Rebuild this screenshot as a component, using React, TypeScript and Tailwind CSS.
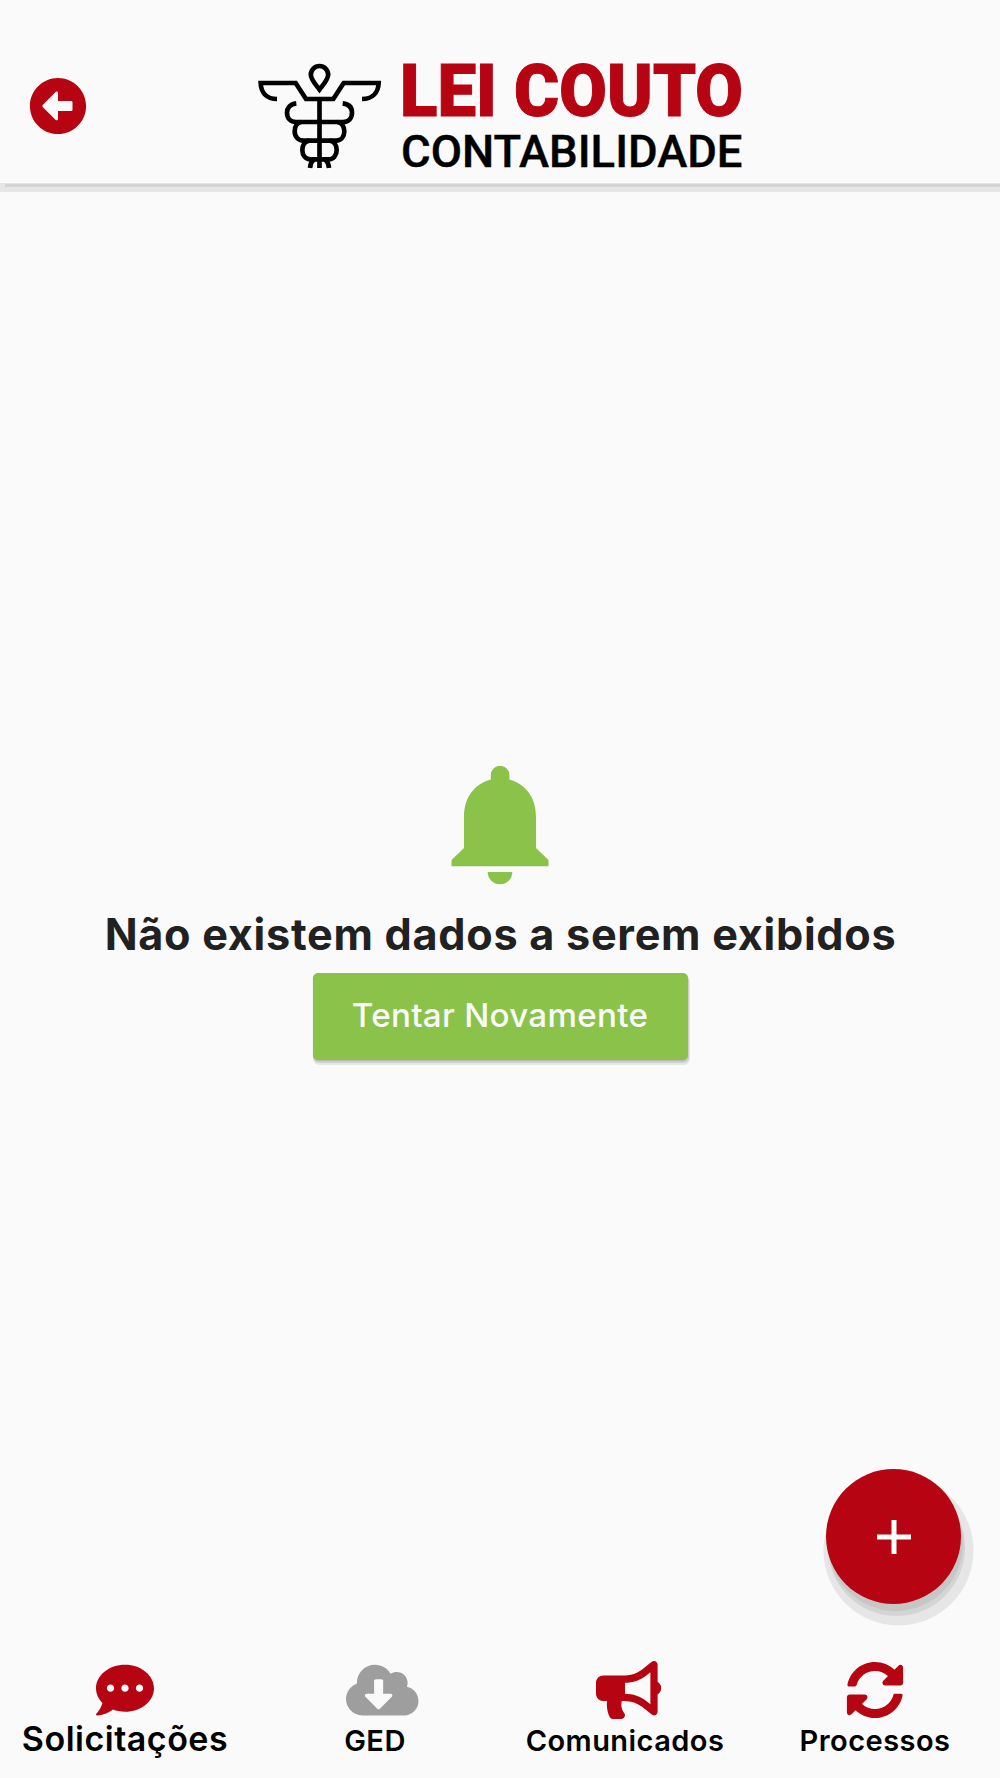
import type { ReactNode } from 'react';
import {
  FaArrowAltCircleLeft,
  FaBullhorn,
  FaCloudDownloadAlt,
  FaCommentDots,
  FaSyncAlt,
} from 'react-icons/fa';

function Logo() {
  return (
    <svg viewBox="250 40 500 140" className="h-[140px] w-[500px] overflow-visible" role="img" aria-label="Lei Couto Contabilidade">
      <g transform="translate(250 50) scale(0.33333)" fill="none" stroke="#000" strokeWidth="14">
        <path d="M208.500 119C196 102 182.500 88 182.500 74A26 26 0 0 1 234.500 74C234.500 88 221 102 208.500 119Z" />
        <path d="M81 147C50 147 33 128 32 99H137L168 147H250L281 99H386C385 128 367 147 336 147" />
        <path d="M208.500 147V354" />
        <path d="M139 160C120 162 111 174 111 188C111 205 122 216 138 216H279C296 216 306 204 306 188C306 172 297 162 278 160" />
        <path d="M154 216C141 218 134 230 134 244C134 260 145 272 160 272H258C273 272 283 260 283 244C283 230 275 218 262 216" />
        <path d="M178 272C164 274 157 286 157 300C157 316 167 328 182 328H236C250 328 260 316 260 300C260 286 252 274 240 272" />
        <path d="M192 328C185 334 181 342 180 354M225 328C232 334 236 342 237 354" />
      </g>
      <text
        x="400"
        y="115.700"
        textLength="343"
        lengthAdjust="spacingAndGlyphs"
        strokeWidth="1"
        className="fill-[#b70413] stroke-[#b70413] font-['Roboto',sans-serif] text-[71.500px] font-black"
      >
        LEI COUTO
      </text>
      <text
        x="401"
        y="167.300"
        textLength="341.500"
        lengthAdjust="spacingAndGlyphs"
        strokeWidth="0.400"
        className="fill-black stroke-black font-['Roboto',sans-serif] text-[44.600px] font-medium"
      >
        CONTABILIDADE
      </text>
    </svg>
  );
}

function Bell() {
  return (
    <svg viewBox="0 0 97 119" className="h-[119px] w-[98px] fill-[#8bc34a]">
      <path d="M39.300 13.500V9.200A9.300 9.300 0 0 1 57.900 9.200V13.500C74 18 84.500 31 84.500 51V82L97 94V100.300H0V94L12.500 82V51C12.500 31 23 18 39.300 13.500Z" />
      <path d="M36.200 106H60.800A12.300 12.300 0 0 1 36.200 106Z" />
    </svg>
  );
}

function Tab({ icon, label, active }: { icon: ReactNode; label: string; active?: boolean }) {
  return (
    <button className="flex flex-col items-center">
      <span className="flex h-[58px] w-[58px] text-[#b70413]">{icon}</span>
      <span
        className={
          active
            ? 'text-[34px] leading-[40px] font-semibold tracking-[0.500px]'
            : 'mt-[2px] text-[29px] leading-[40px] font-semibold tracking-[0.450px]'
        }
      >
        {label}
      </span>
    </button>
  );
}

export default function App() {
  return (
    <div className="relative flex h-[1778px] w-[1000px] flex-col overflow-hidden bg-[#fafafa] font-['Inter',sans-serif] text-black">
      <header className="grid h-[183px] grid-cols-[250px_500px_250px] items-start bg-[#fafafa] pt-[40px] shadow-[0_1px_0_#e4e4e4,5px_4px_0_#d4d4d4,0_9px_0_#e6e6e6]">
        <button className="mt-[37px] ml-[29px] h-[58px] w-[58px]" aria-label="Voltar">
          <FaArrowAltCircleLeft className="h-[58px] w-[58px] text-[#b70413]" />
        </button>
        <Logo />
      </header>

      <main className="flex flex-1 flex-col items-center pt-[583px]">
        <Bell />
        <h1 className="mt-[23px] pl-[1px] text-[43.200px] leading-[52px] font-bold tracking-[0.720px] whitespace-nowrap text-[#212121]">
          Não existem dados a serem exibidos
        </h1>
        <button className="mt-[13px] h-[87px] w-[375px] rounded-[5px] bg-[#8bc34a] pb-[2px] text-[33.200px] font-medium tracking-[0.260px] text-[#fafafa] shadow-[0_1px_1px_#b5b5b5,1px_3px_1px_#cfcfcf,1px_4px_0_1px_#e8e8e8]">
          Tentar Novamente
        </button>
      </main>

      <nav className="grid h-[117px] grid-cols-4">
        <Tab active label="Solicitações" icon={<FaCommentDots className="h-[58px] w-[58px] shrink-0" />} />
        <Tab label="GED" icon={<FaCloudDownloadAlt className="h-[58px] w-[72.500px] shrink-0 text-[#9e9e9e]" />} />
        <Tab label="Comunicados" icon={<FaBullhorn className="h-[58px] w-[65.250px] shrink-0" />} />
        <Tab label="Processos" icon={<FaSyncAlt className="h-[58px] w-[58px] shrink-0" />} />
      </nav>

      <button
        aria-label="Adicionar"
        className="absolute right-[39px] bottom-[174px] flex h-[135px] w-[135px] items-center justify-center rounded-full bg-[#b70413] shadow-[2px_7px_1px_#c6c6c6,3px_11px_0_1px_#d4d4d4,5px_14px_0_7.500px_#e6e6e6]"
      >
        <svg viewBox="0 0 34 34" className="h-[34px] w-[34px] stroke-white" strokeWidth="5">
          <path d="M17 0V34M0 17H34" />
        </svg>
      </button>
    </div>
  );
}
